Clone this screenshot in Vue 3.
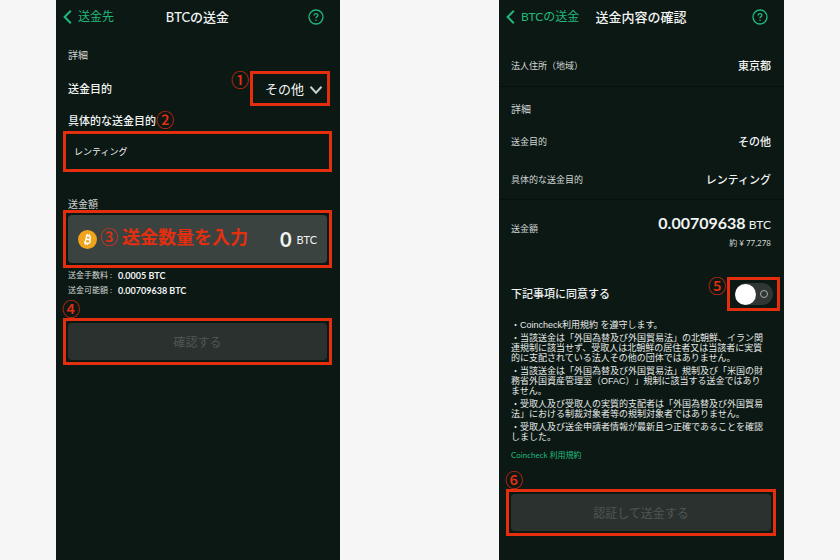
<script setup>
import { ref } from 'vue'

const purpose = ref('その他')
const detail = ref('レンティング')
const amount = ref('0')
const agreed = ref(false)

const fees = [
  { label: '送金手数料', value: '0.0005 BTC' },
  { label: '送金可能額', value: '0.00709638 BTC' },
]

const summary = [
  { label: '送金目的', value: 'その他' },
  { label: '具体的な送金目的', value: 'レンティング' },
]

const terms = [
  '・Coincheck利用規約 を遵守します。',
  '・当該送金は「外国為替及び外国貿易法」の北朝鮮、イラン関連規制に該当せず、受取人は北朝鮮の居住者又は当該者に実質的に支配されている法人その他の団体ではありません。',
  '・当該送金は「外国為替及び外国貿易法」規制及び「米国の財務省外国資産管理室（OFAC）」規制に該当する送金ではありません。',
  '・受取人及び受取人の実質的支配者は「外国為替及び外国貿易法」における制裁対象者等の規制対象者ではありません。',
  '・受取人及び送金申請者情報が最新且つ正確であることを確認しました。',
]
</script>

<template>
  <main class="board">
    <section class="phone">
      <header class="bar">
        <a class="back" href="#">
          <svg class="back-icon" viewBox="0 0 9 14" aria-hidden="true"><path d="M7.800 .7 1.600 7l6.200 6.300" /></svg>
          送金先
        </a>
        <h1>BTCの送金</h1>
        <button class="help" type="button" aria-label="ヘルプ">
          <svg viewBox="0 0 16 16" aria-hidden="true">
            <circle cx="8" cy="8" r="7" />
            <path d="M6.1 6.5C6.1 5.3 7 4.6 8 4.6s1.9.7 1.9 1.7C9.900 7.600 8 7.700 8 9.200" />
            <circle class="dot" cx="8" cy="11.300" r=".8" />
          </svg>
        </button>
      </header>

      <h2 class="heading">詳細</h2>

      <div class="row purpose">
        <label class="strong" for="purpose">送金目的</label>
        <div class="mark select-mark">
          <span class="badge badge-left">①</span>
          <select id="purpose" v-model="purpose">
            <option>その他</option>
          </select>
          <svg class="caret" viewBox="0 0 14 10" aria-hidden="true"><path d="M1.500 1.800 7 7.800l5.500-6" /></svg>
        </div>
      </div>

      <div class="field-label">
        <label class="strong" for="detail">具体的な送金目的</label>
        <span class="badge badge-after">②</span>
      </div>
      <div class="mark">
        <input id="detail" v-model="detail" class="detail" type="text" />
      </div>

      <label class="amount-label" for="amount">送金額</label>
      <div class="mark">
        <div class="amount-box">
          <svg class="coin" viewBox="0 0 20 20" aria-hidden="true">
            <circle cx="10" cy="10" r="10" />
            <g transform="rotate(14 10 10)">
              <path d="M7.300 6.200h3.500a1.800 1.800 0 0 1 0 3.600H8.200M8.200 9.800h3a2 2 0 0 1 0 4H7.300M8.300 6.200v7.600M8.800 4.300v1.900M10.900 4.300v1.900M8.800 13.800v1.900M10.900 13.800v1.900" />
            </g>
          </svg>
          <p class="hint"><span>③</span>送金数量を入力</p>
          <input id="amount" v-model="amount" class="amount" type="text" inputmode="decimal" />
          <span class="unit">BTC</span>
        </div>
      </div>

      <dl class="fees">
        <div v-for="fee in fees" :key="fee.label">
          <dt>{{ fee.label }} :</dt>
          <dd>{{ fee.value }}</dd>
        </div>
      </dl>

      <div class="mark confirm-mark">
        <span class="badge badge-top">④</span>
        <button class="submit" type="button" disabled>確認する</button>
      </div>
    </section>

    <section class="phone phone-confirm">
      <header class="bar">
        <a class="back" href="#">
          <svg class="back-icon" viewBox="0 0 9 14" aria-hidden="true"><path d="M7.800 .7 1.600 7l6.200 6.300" /></svg>
          BTCの送金
        </a>
        <h1>送金内容の確認</h1>
        <button class="help" type="button" aria-label="ヘルプ">
          <svg viewBox="0 0 16 16" aria-hidden="true">
            <circle cx="8" cy="8" r="7" />
            <path d="M6.1 6.5C6.1 5.3 7 4.6 8 4.6s1.9.7 1.9 1.7C9.900 7.600 8 7.700 8 9.200" />
            <circle class="dot" cx="8" cy="11.300" r=".8" />
          </svg>
        </button>
      </header>

      <div class="row address">
        <span class="key">法人住所（地域）</span>
        <span class="strong">東京都</span>
      </div>

      <hr />
      <h2 class="heading">詳細</h2>
      <div class="summary">
        <div v-for="item in summary" :key="item.label" class="row">
          <span class="key">{{ item.label }}</span>
          <span class="strong">{{ item.value }}</span>
        </div>
      </div>
      <hr />

      <div class="row total">
        <span class="key">送金額</span>
        <div class="total-value">
          <p class="total-main"><b>0.00709638</b> BTC</p>
          <p class="total-sub">約 ¥ 77,278</p>
        </div>
      </div>

      <div class="row agree">
        <label class="strong" for="agree">下記事項に同意する</label>
        <div class="mark toggle-mark">
          <span class="badge badge-left">⑤</span>
          <input id="agree" v-model="agreed" class="toggle" type="checkbox" role="switch" />
        </div>
      </div>

      <div class="terms">
        <p v-for="term in terms" :key="term">{{ term }}</p>
      </div>
      <a class="terms-link" href="#">Coincheck 利用規約</a>

      <div class="mark send-mark">
        <span class="badge badge-top">⑥</span>
        <button class="submit" type="button" disabled>認証して送金する</button>
      </div>
    </section>
  </main>
</template>

<style>
body {
  margin: 0;
  background: #f6f6f6;
}
</style>

<style scoped>
.board {
  --red: #e52e0e;
  --green: #20b87c;
  --muted: #d2d7d5;
  box-sizing: border-box;
  min-height: 100vh;
  padding: 0 56px;
  display: grid;
  grid-template-columns: 284fr 159fr 285fr;
  font-family: Lato, "Noto Sans CJK JP", sans-serif;
  color: #f1f4f3;
}

.board * {
  box-sizing: border-box;
}

.phone {
  min-width: 0;
  padding: 0 8px 0 7px;
  background: #0c1814;
}

.phone-confirm {
  grid-column: 3;
}

h1,
h2,
p,
dl,
dd {
  margin: 0;
}

select,
input,
button {
  margin: 0;
  padding: 0;
  border: 0;
  background: none;
  color: inherit;
  font-family: inherit;
}

.bar {
  display: grid;
  grid-template-columns: 1fr auto 1fr;
  align-items: center;
  height: 33px;
}

.bar h1 {
  font-size: 13px;
  line-height: 20px;
  font-weight: 500;
}

.back {
  display: flex;
  align-items: center;
  gap: 6px;
  color: var(--green);
  font-size: 12px;
  line-height: 20px;
  text-decoration: none;
  white-space: nowrap;
}

.back-icon {
  width: 9px;
  height: 14px;
  fill: none;
  stroke: currentColor;
  stroke-width: 2;
}

.help {
  justify-self: end;
  width: 16px;
  height: 16px;
  margin-right: 8px;
  color: var(--green);
}

.help svg {
  display: block;
  fill: none;
  stroke: currentColor;
  stroke-width: 1.3;
}

.help .dot {
  fill: currentColor;
  stroke: none;
}

.heading {
  margin-top: 11px;
  padding-left: 5px;
  font-size: 10px;
  line-height: 22px;
  font-weight: 400;
  color: var(--muted);
}

.row {
  display: flex;
  align-items: center;
  justify-content: space-between;
  padding: 0 5px;
}

.strong {
  font-size: 11px;
  line-height: 20px;
  font-weight: 500;
}

.key {
  font-size: 9px;
  line-height: 20px;
  color: var(--muted);
}

.mark {
  position: relative;
  border: 3px solid var(--red);
  padding: 2px;
}

.badge {
  position: absolute;
  color: var(--red);
  font-family: "Noto Sans CJK JP", sans-serif;
  font-size: 18px;
  line-height: 18px;
  font-weight: 500;
}

.badge-left {
  right: 100%;
  top: -4px;
  margin-right: 4px;
}

.badge-top {
  left: -4px;
  bottom: 100%;
  margin-bottom: 4px;
}

.badge-after {
  left: 100%;
  top: -1px;
}

.purpose {
  margin-top: 5px;
  padding-right: 2px;
}

.select-mark {
  width: 80px;
  height: 35px;
}

.select-mark select {
  width: 100%;
  height: 100%;
  padding-left: 10px;
  appearance: none;
  font-size: 13px;
}

.caret {
  position: absolute;
  right: 4px;
  top: 11px;
  width: 14px;
  height: 10px;
  fill: none;
  stroke: #c9cecc;
  stroke-width: 2;
  pointer-events: none;
}

.field-label {
  position: relative;
  width: fit-content;
  margin-top: 5px;
  padding-left: 5px;
  display: flex;
}

.detail {
  display: block;
  width: 100%;
  height: 31px;
  padding-left: 6px;
  font-size: 9px;
}

.amount-label {
  display: block;
  margin-top: 26px;
  padding-left: 5px;
  font-size: 10px;
  line-height: 12px;
  color: var(--muted);
}

.amount-box {
  display: flex;
  align-items: center;
  height: 48px;
  padding: 0 10px;
  border-radius: 4px;
  background: #3a4340;
}

.coin {
  flex: none;
  width: 19px;
  height: 19px;
  fill: #f0a41c;
}

.coin path {
  fill: none;
  stroke: #ffffff;
  stroke-width: 1.5;
}

.hint {
  display: flex;
  gap: 4px;
  padding: 0 0 6px 3px;
  color: var(--red);
  font-family: "Noto Sans CJK JP", sans-serif;
  font-size: 18px;
  line-height: 24px;
  font-weight: 700;
  white-space: nowrap;
}

.hint span {
  font-weight: 500;
}

.amount {
  flex: 1;
  min-width: 0;
  padding-right: 5px;
  text-align: right;
  font-size: 20px;
  font-weight: 700;
}

.unit {
  font-size: 11px;
}

.fees div {
  display: flex;
  padding-left: 5px;
  line-height: 15px;
}

.fees dt {
  width: 50px;
  font-size: 8px;
  color: var(--muted);
}

.fees dd {
  font-size: 9px;
  font-weight: 700;
}

.confirm-mark {
  margin-top: 20px;
}

.submit {
  display: block;
  width: 100%;
  height: 37px;
  border-radius: 4px;
  background: #2a312e;
  color: #4f5754;
  font-size: 12px;
}

hr {
  height: 1px;
  margin: 0 -8px 0 -7px;
  border: 0;
  background: #07100d;
}

.address {
  height: 40px;
  margin-top: 13px;
}

.summary {
  padding-top: 3px;
}

.summary .row {
  height: 38px;
}

.total {
  height: 57px;
}

.total-value {
  padding-top: 6px;
  text-align: right;
}

.total-main {
  font-size: 12px;
  line-height: 20px;
}

.total-main b {
  font-size: 16px;
}

.total-sub {
  font-size: 8px;
  line-height: 16px;
  color: var(--muted);
}

.agree {
  margin-top: 20px;
  padding-right: 0;
}

.toggle-mark {
  display: grid;
  place-items: center;
  width: 53px;
  height: 34px;
  margin-right: -4px;
}

.toggle {
  display: flex;
  align-items: center;
  justify-content: space-between;
  appearance: none;
  width: 38px;
  height: 22px;
  padding-right: 5px;
  border-radius: 11px;
  background: #2f3634;
}

.toggle::before {
  content: "";
  width: 21px;
  height: 21px;
  border-radius: 50%;
  background: #ffffff;
}

.toggle::after {
  content: "";
  box-sizing: border-box;
  width: 8px;
  height: 8px;
  border: 1px solid #a7adab;
  border-radius: 50%;
}

.toggle:checked {
  flex-direction: row-reverse;
  padding: 0 0 0 5px;
  background: var(--green);
}

.terms {
  display: grid;
  gap: 3px;
  margin-top: 9px;
  padding: 0 8px 0 5px;
  font-family: "Liberation Sans", "Noto Sans CJK JP", sans-serif;
  font-size: 9px;
  line-height: 10px;
  color: #e4e8e6;
  text-spacing-trim: space-all;
}

.terms-link {
  display: block;
  width: fit-content;
  margin-top: 7px;
  padding-left: 5px;
  color: var(--green);
  font-size: 8px;
  line-height: 12px;
  text-decoration: none;
}

.send-mark {
  margin-top: 28px;
}
</style>
